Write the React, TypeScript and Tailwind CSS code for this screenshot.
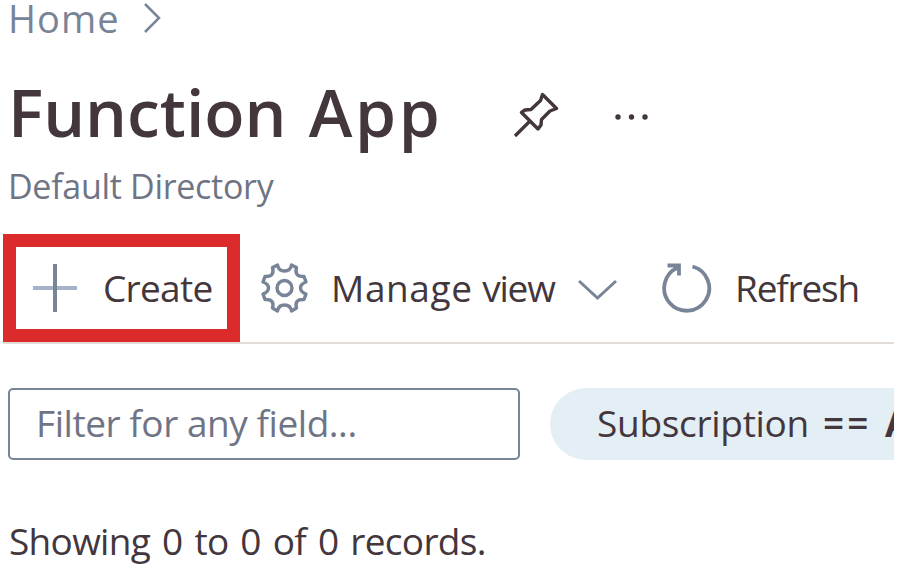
import React from "react";

function PinIcon() {
  return (
    <svg className="h-[52px] w-12 shrink-0" viewBox="5 0 48 52" fill="none" stroke="#43363d" strokeWidth="3.400" strokeLinejoin="round">
      <path d="M34.500 9.500 L48.500 23.500 L42 26 L33.500 34.500 L33 40 L30 44 L13.500 27.500 L17 25 L23 24.500 L32.500 15.500 Z M22 36 L7 51" />
    </svg>
  );
}

function GearIcon() {
  return (
    <svg className="h-[54px] w-[50px] shrink-0" viewBox="4 4 50 54" fill="none" stroke="#788497" strokeWidth="3.400" strokeLinejoin="round">
      <path d="M22.500 8 Q23.500 14 29.500 14 Q35.500 14 36.500 8 L41.500 10.500 Q39 20 49 19.500 L51 25 Q45.500 27 45.500 31 Q45.500 35 51 37 L49 42.500 Q39 42 41.500 51 L36.500 54 Q35.500 48 29.500 48 Q23.500 48 22.500 54 L17.500 51 Q20 42 10 42.500 L8 37 Q13.500 35 13.500 31 Q13.500 27 8 25 L10 19.500 Q20 20 17.500 10.500 Z" />
      <circle cx="29.500" cy="31" r="7.500" />
    </svg>
  );
}

export default function App() {
  return (
    <main className="h-[568px] w-[900px] overflow-hidden bg-white font-['Open_Sans','Noto_Sans',sans-serif] whitespace-nowrap text-[#43363d]">
      <nav className="flex h-[36px] items-center pl-[8px] text-[#788497]">
        <span className="w-[136px] text-[38px] leading-[36px] tracking-[1.100px]">Home</span>
        <svg className="h-[36px] w-5" viewBox="0 0 20 36" fill="none" stroke="#788497" strokeWidth="2.500">
          <path d="M1 4 L15 18 L1 32" />
        </svg>
      </nav>
      <header>
        <div className="mt-[31px] flex h-[88px] items-center pl-[8px]">
          <h1 className="w-[505px] text-[66px] leading-[88px] font-semibold">
            Function <span className="ml-[5px] tracking-[2.700px]">App</span>
          </h1>
          <PinIcon />
          <svg className="mt-[6px] ml-[53px] h-3 w-9" viewBox="0 0 36 12" fill="#43363d">
            <circle cx="4" cy="9" r="2.700" />
            <circle cx="17.500" cy="9" r="2.700" />
            <circle cx="31" cy="9" r="2.700" />
          </svg>
        </div>
        <p className="mt-[9px] h-[44px] pl-[8px] text-[34px] leading-[45px] tracking-[-0.300px] text-[#6f7485]">Default Directory</p>
      </header>
      <div className="mt-[26px] mr-[6px] ml-[3px] flex h-[110px] items-start border-b-2 border-[#e2dcd8]">
        <button className="flex h-[108px] w-[237px] shrink-0 items-center border-[13.500px] border-[#dc2b2b] pl-[16px]">
          <svg className="h-[50px] w-[46px] shrink-0" viewBox="0 0 46 50" fill="none" strokeWidth="4">
            <path d="M1 25 H45" stroke="#a5b3ca" />
            <path d="M23 1 V49" stroke="#788497" />
          </svg>
          <span className="ml-[25px] text-[37px] leading-[80px] tracking-[-0.700px]">Create</span>
        </button>
        <button className="ml-[19px] flex h-[108px] w-[382px] shrink-0 items-center">
          <GearIcon />
          <span className="ml-[22px] w-[247px] text-left text-[37px]">
            <span className="tracking-[0.600px]">Manage</span> <span className="tracking-[-1.200px]">view</span>
          </span>
          <svg className="mt-1 h-6 w-10 shrink-0" viewBox="0 0 40 24" fill="none" stroke="#788497" strokeWidth="3">
            <path d="M1 3 L19.500 20 L38 3" />
          </svg>
        </button>
        <button className="ml-[20px] flex h-[108px] items-center">
          <svg className="h-[54px] w-[54px] shrink-0" viewBox="7 6 54 54" fill="none" stroke="#788497" strokeWidth="3.800">
            <path d="M38.500 11.500 A22.500 22.500 0 1 1 24 12.500 M13.500 10.500 H25 V20.500" />
          </svg>
          <span className="ml-[20px] text-[37px] tracking-[-1.200px]">Refresh</span>
        </button>
      </div>
      <div className="mt-[44px] mr-[6px] ml-[8px] flex h-[72px] overflow-hidden">
        <div className="h-[72px] w-[512px] shrink-0 rounded-[5px] border-[2.500px] border-[#788497] pl-[26px] text-[37px] leading-[66px] tracking-[-0.450px] text-[#6f7485]">Filter for any field...</div>
        <div className="ml-[30px] flex h-[72px] w-[500px] shrink-0 rounded-l-full bg-[#e4eef5] pl-[47px] text-[37px] leading-[70px]">
          <span className="w-[226px] tracking-[-0.300px]">Subscription</span>
          <span className="w-[62px] font-semibold tracking-[3px]">==</span>
          <b>All</b>
        </div>
      </div>
      <p className="mt-[55px] h-[53px] pl-[9px] text-[37px] leading-[51px] tracking-[-0.700px] [word-spacing:3px]">Showing 0 to 0 of 0 records.</p>
    </main>
  );
}
